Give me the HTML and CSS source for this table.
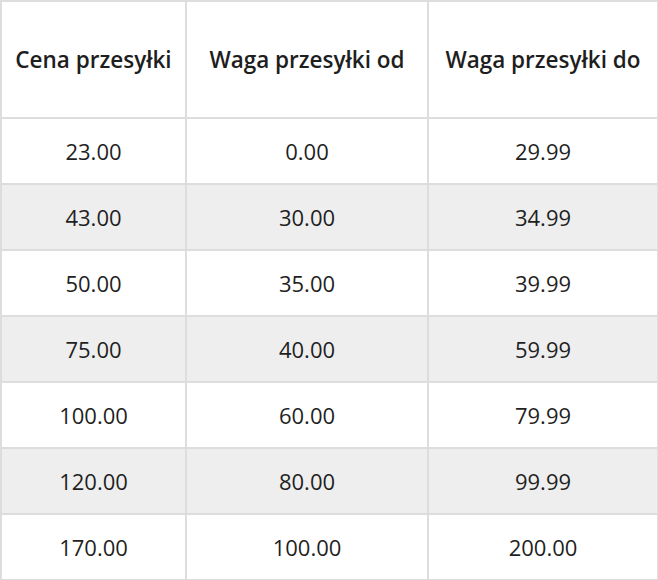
FILE: index.html
```html
<!DOCTYPE html>
<html lang="pl">
<head>
<meta charset="utf-8">
<title>Cennik przesyłek</title>
<link rel="stylesheet" href="styles.css">
</head>
<body>
<table class="rates">
  <colgroup>
    <col class="c1"><col class="c2"><col class="c3">
  </colgroup>
  <thead>
    <tr><th>Cena przesyłki</th><th>Waga przesyłki od</th><th>Waga przesyłki do</th></tr>
  </thead>
  <tbody>
    <tr><td>23.00</td><td>0.00</td><td>29.99</td></tr>
    <tr><td>43.00</td><td>30.00</td><td>34.99</td></tr>
    <tr><td>50.00</td><td>35.00</td><td>39.99</td></tr>
    <tr><td>75.00</td><td>40.00</td><td>59.99</td></tr>
    <tr><td>100.00</td><td>60.00</td><td>79.99</td></tr>
    <tr><td>120.00</td><td>80.00</td><td>99.99</td></tr>
    <tr><td>170.00</td><td>100.00</td><td>200.00</td></tr>
  </tbody>
</table>
</body>
</html>
```
FILE: styles.css
```css
html, body {
  margin: 0;
  padding: 0;
  background: #fff;
}
body {
  font-family: "Open Sans", "Noto Sans", sans-serif;
  color: #222;
}
.rates {
  width: 657px;
  border-collapse: collapse;
  border: 2px solid #ddd;
  table-layout: fixed;
}
.rates .c1 { width: 185px; }
.rates .c2 { width: 242px; }
.rates .c3 { width: 230px; }
.rates th,
.rates td {
  border: 2px solid #ddd;
  text-align: center;
  padding: 0;
}
.rates th {
  height: 115px;
  font-size: 22.5px;
  font-weight: 600;
  color: #1e1e1e;
  white-space: nowrap;
}
.rates td {
  height: 64px;
  font-size: 22px;
  font-weight: 400;
  color: #1f1f1f;
}
.rates tbody tr:nth-child(even) td {
  background: #eee;
}
```
